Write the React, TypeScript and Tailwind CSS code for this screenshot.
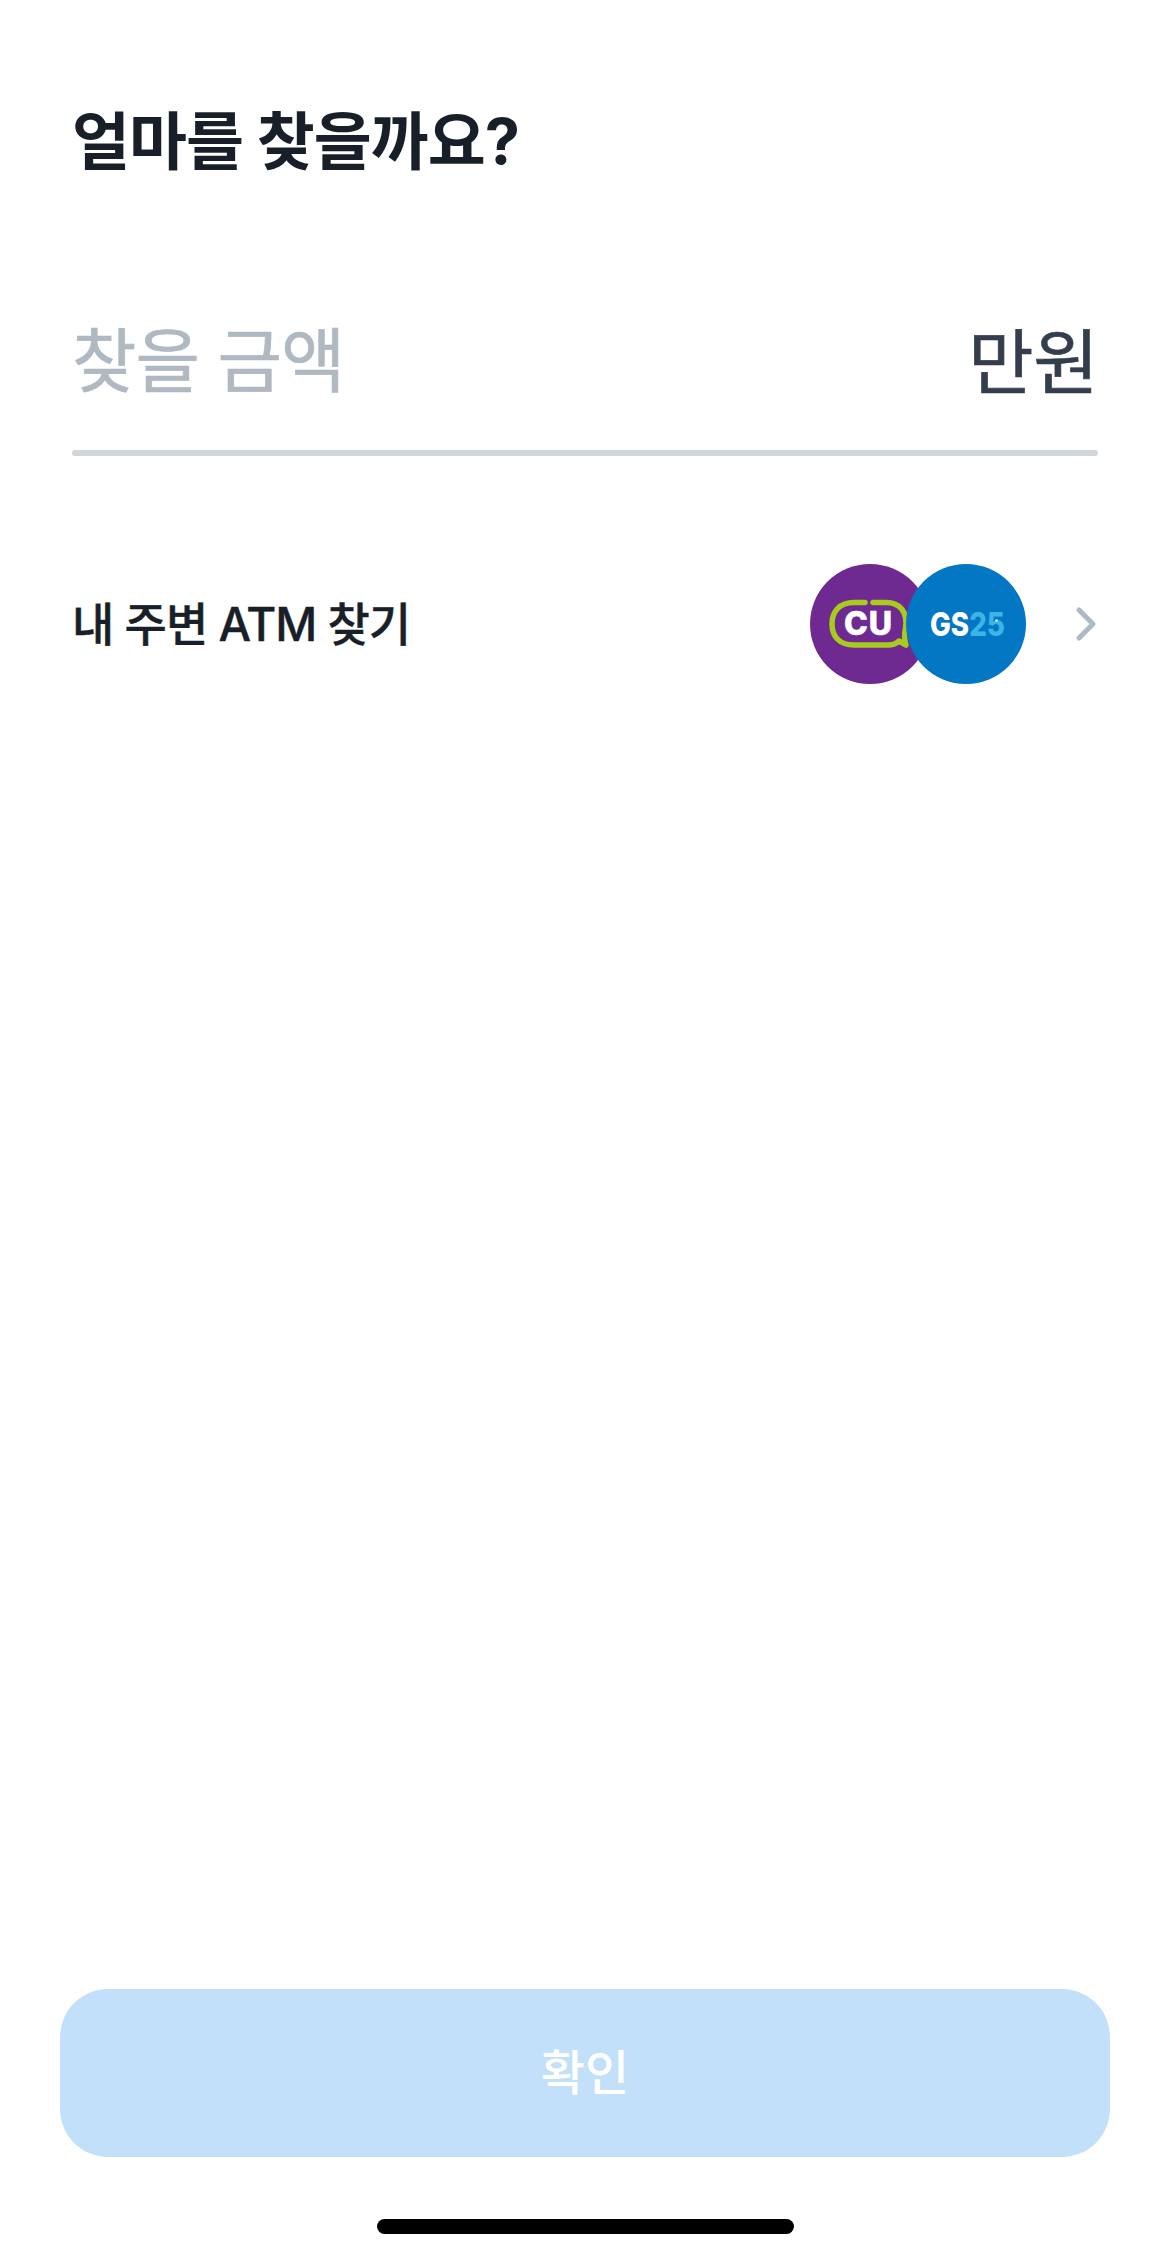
const font = { fontFamily: '"Inter", "Noto Sans CJK KR", sans-serif' };

function CuLogo() {
  return (
    <svg viewBox="0 0 120 120" className="w-[120px] h-[120px] block">
      <circle cx="60" cy="60" r="60" fill="#6f2a91" />
      <path
        d="M55 38.5 H44 C30 38.5 22 47 22 60 C22 73 30 81 44 81 H78 C82 81 86 80 89 77 L96 81 C94 75 94 71 95.5 64 C98 48 90 38.5 76 38.5 H63"
        fill="none"
        stroke="#a8cb1e"
        strokeWidth="5.5"
        strokeLinecap="round"
        strokeLinejoin="round"
      />
      <text x="58.5" y="71" textAnchor="middle" fill="#ffffff" stroke="#ffffff" strokeWidth="0.6" strokeLinejoin="round" fontSize="32" fontWeight="800" letterSpacing="1" fontFamily="Inter, sans-serif">CU</text>
    </svg>
  );
}

function GsLogo() {
  return (
    <svg viewBox="0 0 120 120" className="w-[120px] h-[120px] block">
      <circle cx="60" cy="60" r="60" fill="#0477c4" />
      <text transform="translate(24 72) scale(0.84 1)" fontSize="33" fontWeight="800" fontFamily="Inter, sans-serif">
        <tspan fill="#ffffff">GS</tspan>
        <tspan fill="#3ab5e6">25</tspan>
      </text>
      <circle cx="90.5" cy="56.5" r="1.2" fill="#ffffff" />
    </svg>
  );
}

export default function App() {
  return (
    <div className="w-[1170px] h-[2259px] bg-white flex flex-col overflow-hidden" style={font}>
      <h1 className="mt-[99px] ml-[72px] text-[63px] leading-[84px] font-bold text-[#191f28] tracking-[-1px]">얼마를 찾을까요?</h1>

      <div className="mt-[135px] mx-[72px] flex items-start justify-between">
        <span className="text-[70px] leading-[88px] font-normal [-webkit-text-stroke:0.7px] text-[#b0b8c1] tracking-[-1px]">찾을 금액</span>
        <span className="text-[71px] leading-[88px] font-normal [-webkit-text-stroke:0.7px] text-[#333d4b] tracking-[-0.5px]">만원</span>
      </div>
      <div className="mt-[44px] mx-[72px] h-[6px] rounded-full bg-[#d1d6db]" />

      <div className="mt-[108px] mx-[72px] h-[120px] flex items-center">
        <span className="text-[46px] leading-[60px] font-medium [-webkit-text-stroke:0.4px] text-[#191f28] tracking-[-1px]">내 주변 ATM 찾기</span>
        <div className="ml-auto flex items-center">
          <CuLogo />
          <div className="-ml-[24px]"><GsLogo /></div>
        </div>
        <svg viewBox="0 0 24 36" className="ml-[48px] w-[24px] h-[36px]" fill="none" stroke="#b0b8c1" strokeWidth="5" strokeLinecap="round" strokeLinejoin="round">
          <path d="M5 4 L19 18 L5 32" />
        </svg>
      </div>

      <button className="mt-auto mx-[60px] h-[168px] rounded-[48px] bg-[#c3e0fb] text-white text-[48px] font-medium flex items-center justify-center">확인</button>

      <div className="mt-[62px] mb-[25px] mx-auto w-[417px] h-[15px] rounded-full bg-black" />
    </div>
  );
}
